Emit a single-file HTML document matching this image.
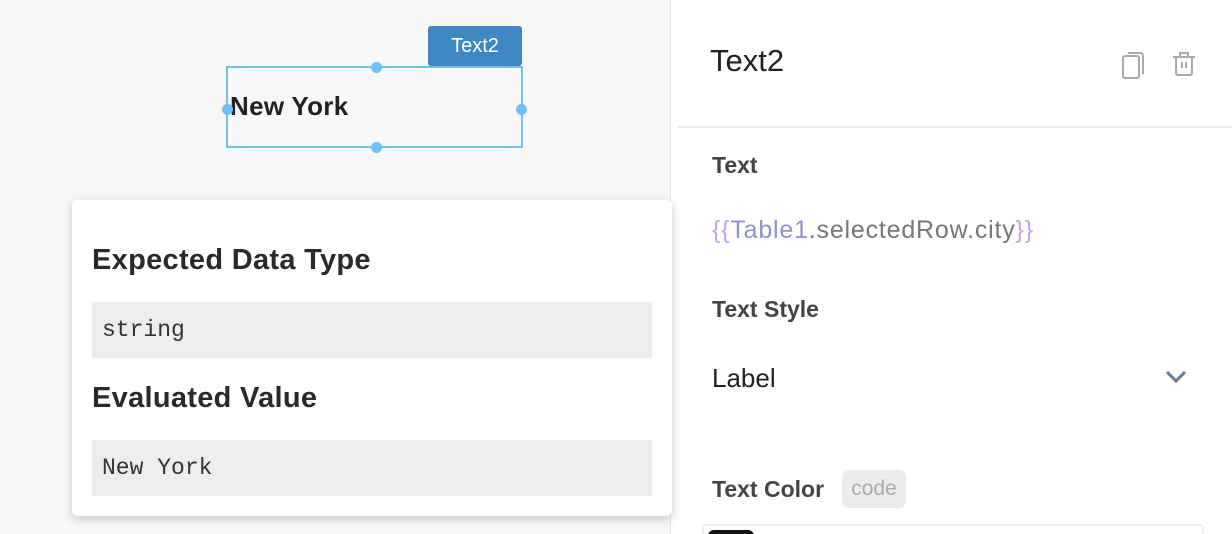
<!DOCTYPE html><html><head><style>
html,body{margin:0;width:1232px;height:534px;overflow:hidden}
body{position:relative;font-family:"Liberation Sans",sans-serif;background:#fff}
.a{position:absolute}
</style></head><body>
<div class="a" style="left:0;top:0;width:670px;height:534px;background:#f7f8fa;border-right:1px solid #e8e8ec"></div>
<div class="a" style="left:428px;top:26px;width:94px;height:40px;background:#3f87c2;border-radius:3px;color:#fff;font-size:20px;line-height:40px;text-align:center">Text2</div>
<div class="a" style="left:226px;top:66px;width:293px;height:78px;border:2px solid #6ec1f0"></div>
<div class="a" style="left:230px;top:91px;font-size:26px;font-weight:bold;color:#222;letter-spacing:0.3px">New York</div>
<div class="a" style="left:371px;top:62px;width:11px;height:11px;border-radius:50%;background:#6ec1f0"></div>
<div class="a" style="left:371px;top:142px;width:11px;height:11px;border-radius:50%;background:#6ec1f0"></div>
<div class="a" style="left:222px;top:104px;width:11px;height:11px;border-radius:50%;background:#6ec1f0"></div>
<div class="a" style="left:516px;top:104px;width:11px;height:11px;border-radius:50%;background:#6ec1f0"></div>
<div class="a" style="left:72px;top:200px;width:600px;height:316px;background:#fff;border-radius:6px;box-shadow:0 3px 10px rgba(0,0,0,.2)"></div>
<div class="a" style="left:92px;top:244px;font-size:29px;font-weight:bold;color:#2a2a2a;letter-spacing:0.3px">Expected Data Type</div>
<div class="a" style="left:92px;top:302px;width:560px;height:56px;background:#ededf0;font-family:'Liberation Mono',monospace;font-size:23px;line-height:56px;color:#333;text-indent:10px">string</div>
<div class="a" style="left:92px;top:382px;font-size:29px;font-weight:bold;color:#2a2a2a;letter-spacing:0.3px">Evaluated Value</div>
<div class="a" style="left:92px;top:440px;width:560px;height:56px;background:#ededf0;font-family:'Liberation Mono',monospace;font-size:23px;line-height:56px;color:#333;text-indent:10px">New York</div>
<div class="a" style="left:710px;top:43px;font-size:31px;color:#222">Text2</div>
<svg class="a" style="left:1120px;top:50px" width="30" height="30" viewBox="0 0 30 30" fill="none" stroke="#aaa" stroke-width="2"><rect x="3" y="6" width="16" height="22" rx="2"/><path d="M8 3h12a3 3 0 0 1 3 3v18"/></svg>
<svg class="a" style="left:1170px;top:50px" width="28" height="28" viewBox="0 0 28 28" fill="none" stroke="#aaa" stroke-width="2"><path d="M3 7h22M10 7V3h8v4M6 7v16a2 2 0 0 0 2 2h12a2 2 0 0 0 2-2V7M12 12v6M16 12v6"/></svg>
<div class="a" style="left:678px;top:126px;width:554px;height:2px;background:#ebebeb"></div>
<div class="a" style="left:712px;top:152px;font-size:23px;font-weight:bold;color:#444">Text</div>
<div class="a" style="left:712px;top:216px;font-size:25px;color:#777;letter-spacing:0.8px"><span style="color:#c3a6e8">{{</span><span style="color:#8f8fd6">Table1</span>.selectedRow.city<span style="color:#c3a6e8">}}</span></div>
<div class="a" style="left:712px;top:296px;font-size:23px;font-weight:bold;color:#444">Text Style</div>
<div class="a" style="left:712px;top:363px;font-size:26px;color:#222">Label</div>
<svg class="a" style="left:1164px;top:368px" width="24" height="18" viewBox="0 0 24 18" fill="none" stroke="#6a7a8a" stroke-width="3"><path d="M3 4l9 9 9-9"/></svg>
<div class="a" style="left:712px;top:476px;font-size:23px;font-weight:bold;color:#444">Text Color</div>
<div class="a" style="left:842px;top:470px;width:64px;height:38px;border-radius:7px;background:#ececef;color:#aaa;font-size:21px;line-height:38px;text-align:center">code</div>
<div class="a" style="left:702px;top:524px;width:498px;height:20px;border:2px solid #eceef1;border-radius:4px"></div>
<div class="a" style="left:708px;top:530px;width:46px;height:20px;background:#111;border-radius:6px"></div>
</body></html>
